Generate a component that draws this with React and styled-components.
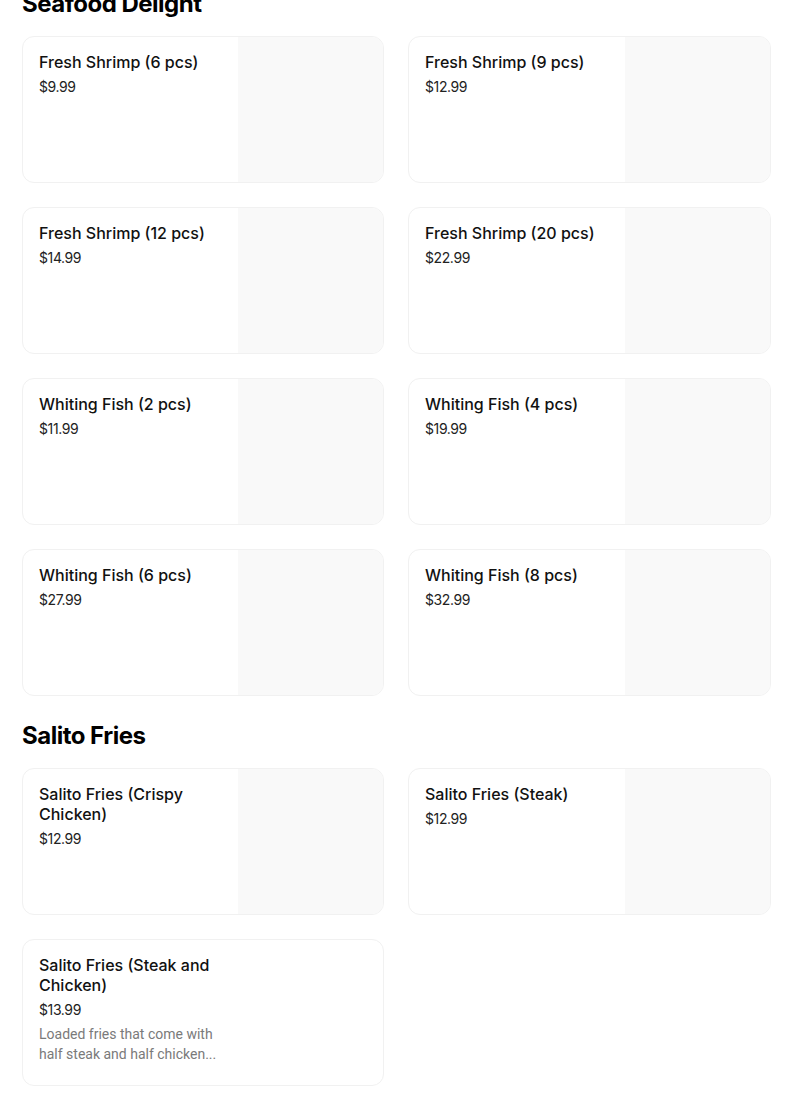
import React from 'react';
import styled, { createGlobalStyle } from 'styled-components';

const sections = [
  {
    title: 'Seafood Delight',
    items: [
      { name: 'Fresh Shrimp (6 pcs)', price: '$9.99', image: true },
      { name: 'Fresh Shrimp (9 pcs)', price: '$12.99', image: true },
      { name: 'Fresh Shrimp (12 pcs)', price: '$14.99', image: true },
      { name: 'Fresh Shrimp (20 pcs)', price: '$22.99', image: true },
      { name: 'Whiting Fish (2 pcs)', price: '$11.99', image: true },
      { name: 'Whiting Fish (4 pcs)', price: '$19.99', image: true },
      { name: 'Whiting Fish (6 pcs)', price: '$27.99', image: true },
      { name: 'Whiting Fish (8 pcs)', price: '$32.99', image: true },
    ],
  },
  {
    title: 'Salito Fries',
    items: [
      { name: 'Salito Fries (Crispy Chicken)', price: '$12.99', image: true },
      { name: 'Salito Fries (Steak)', price: '$12.99', image: true },
      {
        name: 'Salito Fries (Steak and Chicken)',
        price: '$13.99',
        description: 'Loaded fries that come with half steak and half chicken...',
      },
    ],
  },
];

function App() {
  return (
    <>
      <GlobalStyle />
      <Page>
        {sections.map((section) => (
          <Section key={section.title}>
            <Heading>{section.title}</Heading>
            <Grid>
              {section.items.map((item) => (
                <Card key={item.name}>
                  <Info>
                    <Name>{item.name}</Name>
                    <Price>{item.price}</Price>
                    {item.description && <Description>{item.description}</Description>}
                  </Info>
                  {item.image && <Thumb />}
                </Card>
              ))}
            </Grid>
          </Section>
        ))}
      </Page>
    </>
  );
}

const GlobalStyle = createGlobalStyle`
  body {
    margin: 0;
    background: #ffffff;
    font-family: Inter, "Noto Sans", sans-serif;
    color: #000000;
  }
`;

const Page = styled.div`
  width: 749px;
  margin-left: 22px;
  margin-top: -12px;
  display: flex;
  flex-direction: column;
  gap: 24px;
`;

const Section = styled.section`
  display: flex;
  flex-direction: column;
  gap: 16px;
`;

const Heading = styled.h2`
  margin: 0;
  font-size: 24px;
  line-height: 32px;
  font-weight: 700;
  letter-spacing: -0.5px;
`;

const Grid = styled.div`
  display: grid;
  grid-template-columns: 362px 363px;
  gap: 24px;
`;

const Card = styled.div`
  display: flex;
  height: 147px;
  box-sizing: border-box;
  border: 1px solid #f1f1f1;
  border-radius: 12px;
  overflow: hidden;
  background: #ffffff;
`;

const Info = styled.div`
  flex: 1;
  min-width: 0;
  padding: 15px 16px 16px 16px;
  display: flex;
  flex-direction: column;
`;

const Name = styled.div`
  font-size: 16px;
  line-height: 20px;
  font-weight: 500;
  color: #111111;
  width: 183px;
`;

const Price = styled.div`
  margin-top: 5px;
  font-size: 14px;
  line-height: 20px;
  color: #222222;
  letter-spacing: -0.4px;
`;

const Description = styled.div`
  margin-top: 4px;
  width: 186px;
  font-family: Roboto, "Noto Sans", sans-serif;
  font-size: 14px;
  line-height: 20px;
  color: #7a7a7a;
  display: -webkit-box;
  -webkit-box-orient: vertical;
  -webkit-line-clamp: 2;
  overflow: hidden;
`;

const Thumb = styled.div`
  width: 145px;
  flex-shrink: 0;
  background: #f9f9f9;
`;

export default App;
